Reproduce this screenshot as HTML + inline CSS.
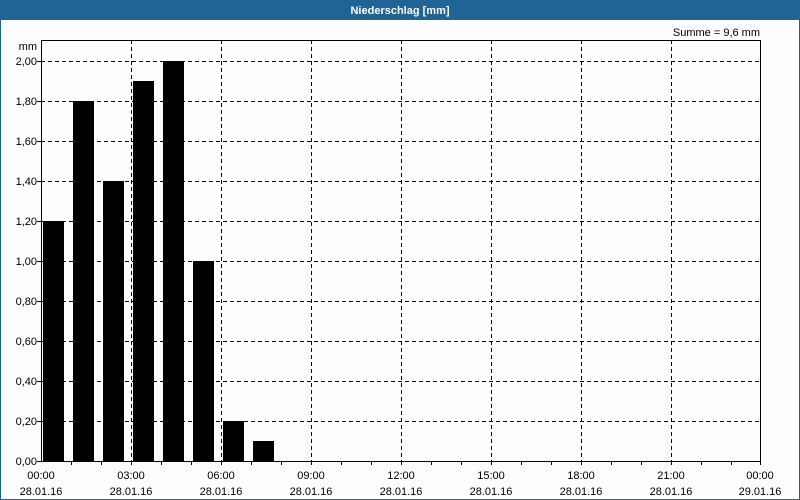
<!DOCTYPE html>
<html><head><style>
html,body{margin:0;padding:0;width:800px;height:500px;overflow:hidden;background:#fcfdfc;}
svg{display:block}
text{font-family:"Liberation Sans","DejaVu Sans",sans-serif;font-size:11px;fill:#000}
</style></head><body>
<svg width="800" height="500" viewBox="0 0 800 500" xmlns="http://www.w3.org/2000/svg">
<rect x="0" y="0" width="800" height="500" fill="#fcfdfc"/>
<rect x="0" y="0" width="800" height="20" fill="#1e6497"/>
<rect x="0.5" y="0.5" width="799" height="499" fill="none" stroke="#1e6497"/>
<text x="400" y="14" text-anchor="middle" style="fill:#fff;font-weight:bold;font-size:11px">Niederschlag [mm]</text>
<text x="760" y="36" text-anchor="end">Summe = 9,6 mm</text>
<text x="37" y="50" text-anchor="end">mm</text>
<g stroke="#000" stroke-width="1" stroke-dasharray="4,3" shape-rendering="crispEdges">
<line x1="41" y1="61.5" x2="760" y2="61.5"/><line x1="41" y1="101.5" x2="760" y2="101.5"/>
<line x1="41" y1="141.5" x2="760" y2="141.5"/><line x1="41" y1="181.5" x2="760" y2="181.5"/>
<line x1="41" y1="221.5" x2="760" y2="221.5"/><line x1="41" y1="261.5" x2="760" y2="261.5"/>
<line x1="41" y1="301.5" x2="760" y2="301.5"/><line x1="41" y1="341.5" x2="760" y2="341.5"/>
<line x1="41" y1="381.5" x2="760" y2="381.5"/><line x1="41" y1="421.5" x2="760" y2="421.5"/>
<line x1="131.5" y1="40" x2="131.5" y2="461"/><line x1="221.5" y1="40" x2="221.5" y2="461"/>
<line x1="311.5" y1="40" x2="311.5" y2="461"/><line x1="401.5" y1="40" x2="401.5" y2="461"/>
<line x1="491.5" y1="40" x2="491.5" y2="461"/><line x1="581.5" y1="40" x2="581.5" y2="461"/>
<line x1="671.5" y1="40" x2="671.5" y2="461"/>
</g>
<g fill="#000" shape-rendering="crispEdges">
<rect x="43" y="221" width="21" height="240"/>
<rect x="73" y="101" width="21" height="360"/>
<rect x="103" y="181" width="21" height="280"/>
<rect x="133" y="81" width="21" height="380"/>
<rect x="163" y="61" width="21" height="400"/>
<rect x="193" y="261" width="21" height="200"/>
<rect x="223" y="421" width="21" height="40"/>
<rect x="253" y="441" width="21" height="20"/>
</g>
<rect x="41.5" y="40.5" width="719" height="421" fill="none" stroke="#000" shape-rendering="crispEdges"/>
<g stroke="#000" shape-rendering="crispEdges" id="ticks"></g>
<g stroke="#000" shape-rendering="crispEdges">
<path d="M71.5 461v4M101.5 461v4M131.5 461v4M161.5 461v4M191.5 461v4M221.5 461v4M251.5 461v4M281.5 461v4M311.5 461v4M341.5 461v4M371.5 461v4M401.5 461v4M431.5 461v4M461.5 461v4M491.5 461v4M521.5 461v4M551.5 461v4M581.5 461v4M611.5 461v4M641.5 461v4M671.5 461v4M701.5 461v4M731.5 461v4M760.5 461v4"/>
<path d="M37 61.5h4M37 101.5h4M37 141.5h4M37 181.5h4M37 221.5h4M37 261.5h4M37 301.5h4M37 341.5h4M37 381.5h4M37 421.5h4M37 461.5h4"/>
</g>
<g text-anchor="end">
<text x="37" y="65">2,00</text><text x="37" y="105">1,80</text><text x="37" y="145">1,60</text>
<text x="37" y="185">1,40</text><text x="37" y="225">1,20</text><text x="37" y="265">1,00</text>
<text x="37" y="305">0,80</text><text x="37" y="345">0,60</text><text x="37" y="385">0,40</text>
<text x="37" y="425">0,20</text><text x="37" y="465">0,00</text>
</g>
<g text-anchor="middle">
<text x="41" y="479">00:00</text><text x="41" y="495">28.01.16</text>
<text x="131" y="479">03:00</text><text x="131" y="495">28.01.16</text>
<text x="221" y="479">06:00</text><text x="221" y="495">28.01.16</text>
<text x="311" y="479">09:00</text><text x="311" y="495">28.01.16</text>
<text x="401" y="479">12:00</text><text x="401" y="495">28.01.16</text>
<text x="491" y="479">15:00</text><text x="491" y="495">28.01.16</text>
<text x="581" y="479">18:00</text><text x="581" y="495">28.01.16</text>
<text x="671" y="479">21:00</text><text x="671" y="495">28.01.16</text>
<text x="760" y="479">00:00</text><text x="760" y="495">29.01.16</text>
</g>
</svg>
</body></html>
